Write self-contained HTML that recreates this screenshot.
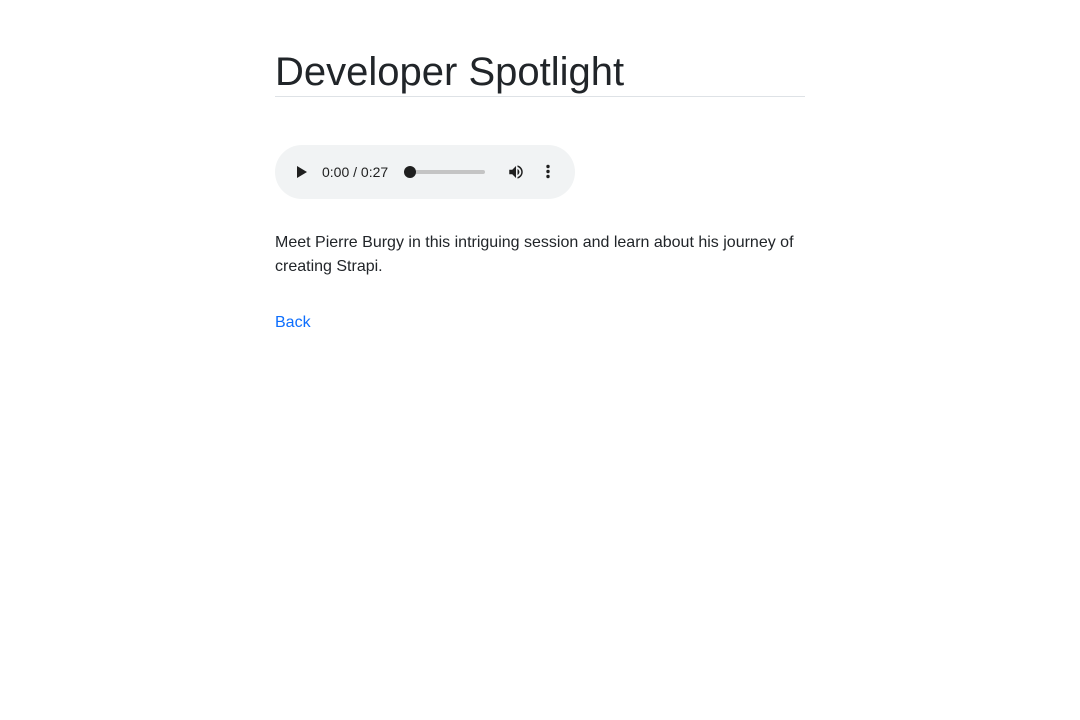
<!DOCTYPE html>
<html><head><meta charset="utf-8"><style>
body{margin:0;background:#fff;font-family:"Liberation Sans",sans-serif;color:#212529;}
.wrap{position:absolute;left:275px;top:0;width:530px;}
h1{position:absolute;top:49px;left:0;margin:0;font-size:40px;font-weight:400;line-height:46px;white-space:nowrap;}
.hr{position:absolute;top:96px;left:0;width:530px;height:1px;background:#dee2e6;}
.player{position:absolute;top:145px;left:0;width:300px;height:54px;border-radius:27px;background:#f1f3f4;}
.t{position:absolute;left:47px;top:19px;font-size:14px;color:#1f1f1f;}
.bar{position:absolute;left:130px;top:25px;width:80px;height:4px;border-radius:2px;background:#c4c4c4;}
.dot{position:absolute;left:129px;top:21px;width:12px;height:12px;border-radius:6px;background:#1f1f1f;}
p{position:absolute;top:231px;left:0;margin:0;font-size:16px;line-height:24px;width:530px;}
a{position:absolute;top:311px;left:0;font-size:16px;line-height:24px;color:#0d6efd;text-decoration:none;}
</style></head><body><div class="wrap">
<h1>Developer Spotlight</h1><div class="hr"></div>
<div class="player">
<svg style="position:absolute;left:21px;top:21px" width="12" height="12"><path d="M1 0L11 6L1 12Z" fill="#1f1f1f"/></svg>
<div class="t">0:00 / 0:27</div>
<div class="bar"></div><div class="dot"></div>
<svg style="position:absolute;left:232px;top:18px" width="18" height="18" viewBox="0 0 24 24"><path d="M3 9v6h4l5 5V4L7 9H3zm13.5 3c0-1.77-1.02-3.29-2.5-4.03v8.05c1.48-.73 2.5-2.250 2.5-4.02zM14 3.23v2.06c2.89.86 5 3.54 5 6.71s-2.110 5.85-5 6.71v2.06c4.01-.91 7-4.49 7-8.77s-2.990-7.86-7-8.77z" fill="#1f1f1f"/></svg>
<svg style="position:absolute;left:271px;top:19px" width="4" height="16"><circle cx="2" cy="2.5" r="1.7" fill="#1f1f1f"/><circle cx="2" cy="7.5" r="1.7" fill="#1f1f1f"/><circle cx="2" cy="12.5" r="1.7" fill="#1f1f1f"/></svg>
</div>
<p>Meet Pierre Burgy in this intriguing session and learn about his journey of creating Strapi.</p>
<a href="#">Back</a>
</div></body></html>
